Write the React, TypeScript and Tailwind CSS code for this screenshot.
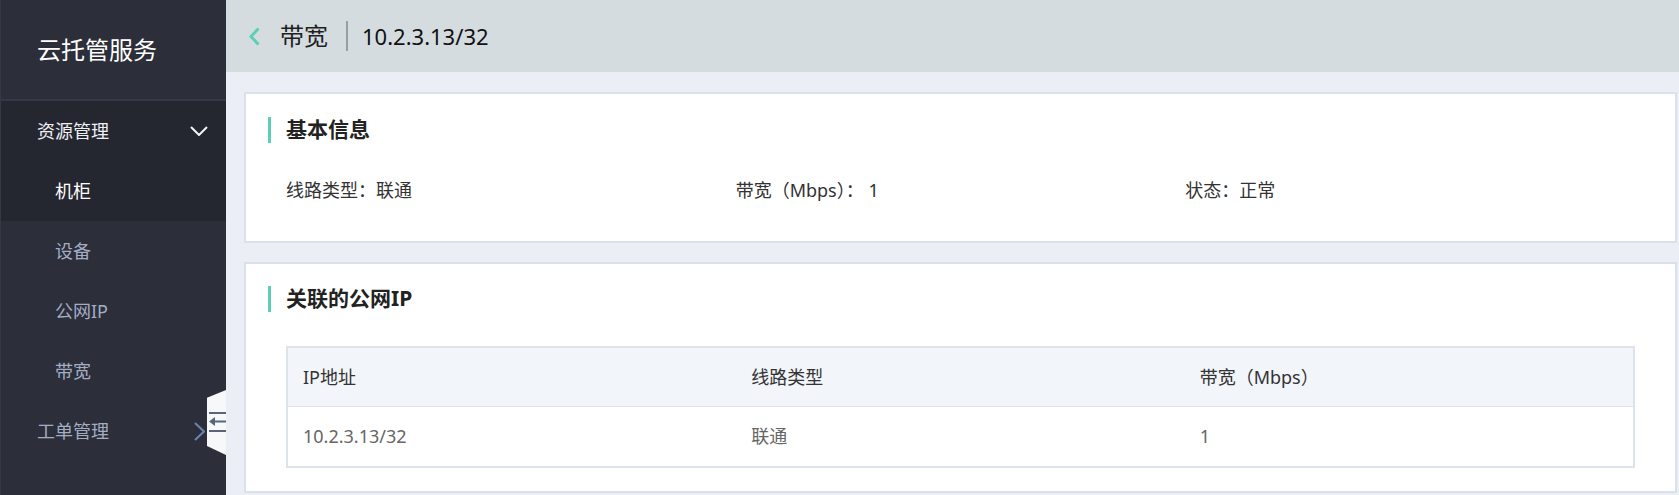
import React from 'react';

const subItems = ['设备', '公网IP', '带宽'];

const infoItems = [
  { label: '线路类型：', value: '联通' },
  { label: '带宽（Mbps）：', value: ' 1' },
  { label: '状态：', value: '正常' },
];

const columns = ['IP地址', '线路类型', '带宽（Mbps）'];
const rows = [['10.2.3.13/32', '联通', '1']];

const SectionTitle = ({ title }: { title: string }) => (
  <div className="ml-[22px] border-l-[3px] border-[#5dcfb4] pl-[15px] h-[26px] flex items-center text-[21px] font-bold text-[#222]">
    {title}
  </div>
);

const Sidebar = () => {
  return (
    <div className="relative w-[226px] shrink-0 h-full bg-[#2c2e3a] border-l border-[#343849]">
      <div className="h-[101px] flex items-center pl-[36px] text-[24px] text-white border-b-2 border-[#363846]">
        云托管服务
      </div>
      <div className="bg-[#252730]">
        <div className="h-[60px] flex items-center justify-between pl-[36px] pr-[18px] text-[18px] text-[#eef0f5]">
          <span>资源管理</span>
          <svg width="18" height="10" viewBox="0 0 18 10" fill="none">
            <polyline points="1,1 9,9 17,1" stroke="#f2f4f8" strokeWidth="2" />
          </svg>
        </div>
        <div className="h-[60px] flex items-center pl-[54px] text-[18px] text-white">
          机柜
        </div>
      </div>
      {subItems.map((item, idx) => {
        return (
          <div
            key={idx}
            className="h-[60px] flex items-center pl-[54px] text-[18px] text-[#a3adc3]"
          >
            {item}
          </div>
        );
      })}
      <div className="h-[60px] flex items-center justify-between pl-[36px] pr-[21px] text-[18px] text-[#a3adc3]">
        <span>工单管理</span>
        <svg width="11" height="19" viewBox="0 0 11 19" fill="none">
          <polyline points="1,1 10,9.5 1,18" stroke="#6a84b4" strokeWidth="2" />
        </svg>
      </div>
      {/* collapse handle */}
      <div className="absolute right-0 top-[390px] w-[19px] h-[65px] bg-[#f7f8fa] [clip-path:polygon(0_12%,100%_0,100%_100%,0_86%)] flex items-center justify-end">
        <svg width="17" height="21" viewBox="0 0 17 21" fill="none">
          <rect x="0" y="0" width="17" height="2" fill="#5b6578" />
          <rect x="0" y="18" width="17" height="2" fill="#5b6578" />
          <polygon points="0,9.5 6,5 6,14" fill="#5b6578" />
          <rect x="5" y="8.5" width="12" height="2" fill="#5b6578" />
        </svg>
      </div>
    </div>
  );
};

const App = () => {
  return (
    <div className="flex w-full h-[495px] overflow-hidden bg-[#ebeff5] font-['Noto_Sans','Noto_Sans_CJK_SC',sans-serif]">
      <Sidebar />
      <div className="flex-1 flex flex-col min-w-0">
        <div className="h-[72px] shrink-0 bg-[#d5dce0] flex items-center pl-[23px]">
          <svg width="11" height="19" viewBox="0 0 11 19" fill="none">
            <polyline points="9.5,1.5 2,9.5 9.5,17.5" stroke="#5dcfb4" strokeWidth="3" />
          </svg>
          <span className="ml-[20px] text-[24px] text-[#1f1f1f]">带宽</span>
          <div className="ml-[18px] w-[2px] h-[30px] bg-[#9a9ea3]"></div>
          <span className="ml-[14px] text-[22px] text-[#111]">10.2.3.13/32</span>
        </div>
        <div className="flex-1 pl-[18px] pr-[2px] pt-[20px] flex flex-col gap-[19px]">
          <div className="bg-white border-2 border-[#dae1ea] pt-[23px] pb-[38px]">
            <SectionTitle title="基本信息" />
            <div className="grid grid-cols-3 px-[40px] mt-[34px] text-[18px] text-[#333] leading-[26px] whitespace-pre">
              {infoItems.map((info, idx) => {
                return (
                  <div key={idx}>
                    {info.label}
                    {info.value}
                  </div>
                );
              })}
            </div>
          </div>
          <div className="bg-white border-2 border-[#dae1ea] pt-[22px] pb-[23px]">
            <SectionTitle title="关联的公网IP" />
            <div className="mx-[40px] mt-[34px] border-2 border-[#dce3eb]">
              <div className="grid grid-cols-3 h-[59px] items-center bg-[#f2f5fa] border-b border-[#dce3eb] text-[18px] text-[#333]">
                {columns.map((col, idx) => {
                  return (
                    <div key={idx} className="pl-[15px]">
                      {col}
                    </div>
                  );
                })}
              </div>
              {rows.map((row, idx) => {
                return (
                  <div
                    key={idx}
                    className="grid grid-cols-3 h-[59px] items-center text-[18px] text-[#666]"
                  >
                    {row.map((cell, cidx) => {
                      return (
                        <div key={cidx} className="pl-[15px]">
                          {cell}
                        </div>
                      );
                    })}
                  </div>
                );
              })}
            </div>
          </div>
        </div>
      </div>
    </div>
  );
};

export default App;
